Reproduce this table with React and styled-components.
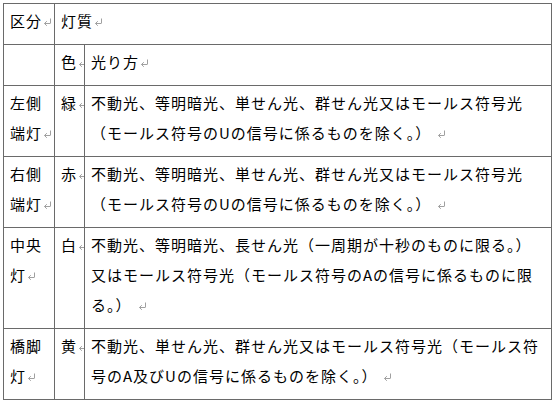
import React from "react";
import styled, { createGlobalStyle } from "styled-components";

const GlobalStyle = createGlobalStyle`
  body {
    margin: 0;
    background: #ffffff;
  }
`;

const Page = styled.div`
  padding: 3px 0 0 3px;
  font-family: "Noto Sans CJK JP", "Noto Sans", sans-serif;
  font-size: 15px;
  letter-spacing: 1px;
  color: #000000;
`;

const Table = styled.table`
  border-collapse: collapse;
  table-layout: fixed;
  width: 549px;
`;

const Cell = styled.td`
  border: 1px solid #6a6a6a;
  padding: 2px 0 8px 6px;
  line-height: 30px;
  vertical-align: top;
  white-space: ${(p) => (p.$nowrap ? "nowrap" : "normal")};
  overflow: ${(p) => (p.$clip ? "hidden" : "visible")};
`;

const Line = styled.div`
  white-space: nowrap;
`;

const Mark = styled.svg`
  display: inline-block;
  width: 9px;
  height: 8px;
  margin-left: ${(p) => p.$gap || 1}px;
  vertical-align: 1px;
`;

// Word-style paragraph mark
const ReturnMark = ({ gap }) => (
  <Mark viewBox="0 0 9 8" $gap={gap}>
    <path
      d="M7.5 0.5 V5 Q7.5 5.5 7 5.5 H1.5 M3.8 3.2 L1.5 5.5 L3.8 7.8"
      fill="none"
      stroke="#a0a0a0"
      strokeWidth="1"
    />
  </Mark>
);

const rows = [
  {
    name: ["左側", "端灯"],
    color: "緑",
    lines: [
      "不動光、等明暗光、単せん光、群せん光又はモールス符号光",
      "（モールス符号のUの信号に係るものを除く。）",
    ],
  },
  {
    name: ["右側", "端灯"],
    color: "赤",
    lines: [
      "不動光、等明暗光、単せん光、群せん光又はモールス符号光",
      "（モールス符号のUの信号に係るものを除く。）",
    ],
  },
  {
    name: ["中央", "灯"],
    color: "白",
    lines: [
      "不動光、等明暗光、長せん光（一周期が十秒のものに限る。）",
      "又はモールス符号光（モールス符号のAの信号に係るものに限",
      "る。）",
    ],
  },
  {
    name: ["橋脚", "灯"],
    color: "黄",
    lines: [
      "不動光、単せん光、群せん光又はモールス符号光（モールス符",
      "号のA及びUの信号に係るものを除く。）",
    ],
  },
];

const LightTable = () => (
  <Table>
    <colgroup>
      <col style={{ width: 51 }} />
      <col style={{ width: 30 }} />
      <col />
    </colgroup>
    <tbody>
      <tr>
        <Cell>
          区分
          <ReturnMark />
        </Cell>
        <Cell colSpan={2}>
          灯質
          <ReturnMark />
        </Cell>
      </tr>
      <tr>
        <Cell />
        <Cell $nowrap $clip>
          色
          <ReturnMark />
        </Cell>
        <Cell>
          光り方
          <ReturnMark />
        </Cell>
      </tr>
      {rows.map((row) => (
        <tr key={row.color}>
          <Cell>
            {row.name.map((part, i) => (
              <Line key={part}>
                {part}
                {i === row.name.length - 1 && <ReturnMark />}
              </Line>
            ))}
          </Cell>
          <Cell $nowrap $clip>
            {row.color}
            <ReturnMark />
          </Cell>
          <Cell>
            {row.lines.map((text, i) => (
              <Line key={i}>
                {text}
                {i === row.lines.length - 1 && <ReturnMark gap={6} />}
              </Line>
            ))}
          </Cell>
        </tr>
      ))}
    </tbody>
  </Table>
);

export default function App() {
  return (
    <>
      <GlobalStyle />
      <Page>
        <LightTable />
      </Page>
    </>
  );
}
